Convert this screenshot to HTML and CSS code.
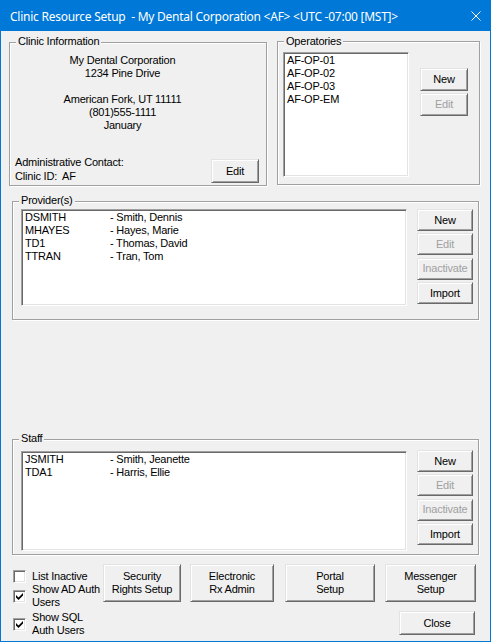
FILE: index.html
```html
<!DOCTYPE html>
<html lang="en">
<head>
  <meta charset="UTF-8" />
  <title>Clinic Resource Setup</title>
  <link rel="stylesheet" href="styles.css">
</head>
<body>
  <div class="window">
    <div class="titlebar">
      <span class="title">Clinic Resource Setup  - My Dental Corporation &lt;AF&gt; &lt;UTC -07:00 [MST]&gt;</span>
      <svg class="close-x" width="10" height="10" viewBox="0 0 10 10">
        <path d="M0.5 0.5L9.5 9.5M9.5 0.5L0.5 9.5" stroke="#fff" stroke-width="1" fill="none"/>
      </svg>
    </div>

    <div class="client">
      <div class="top-row">
        <div class="group clinic">
          <span class="group-label">Clinic Information</span>
          <div class="address">
            <div>My Dental Corporation</div>
            <div>1234 Pine Drive</div>
            <div class="blank"></div>
            <div>American Fork, UT 11111</div>
            <div>(801)555-1111</div>
            <div>January</div>
          </div>
          <div class="clinic-foot">
            <div class="contact">
              <div>Administrative Contact:</div>
              <div>Clinic ID:&nbsp; AF</div>
            </div>
            <button class="btn btn-clinic-edit">Edit</button>
          </div>
        </div>

        <div class="group operatories">
          <span class="group-label">Operatories</span>
          <div class="listbox op-list">
            <div>AF-OP-01</div>
            <div>AF-OP-02</div>
            <div>AF-OP-03</div>
            <div>AF-OP-EM</div>
          </div>
          <div class="btn-col op-buttons">
            <button class="btn">New</button>
            <button class="btn" disabled>Edit</button>
          </div>
        </div>
      </div>

      <div class="group people providers">
        <span class="group-label">Provider(s)</span>
        <div class="listbox people-list">
          <div class="row"><span class="code">DSMITH</span><span>- Smith, Dennis</span></div>
          <div class="row"><span class="code">MHAYES</span><span>- Hayes, Marie</span></div>
          <div class="row"><span class="code">TD1</span><span>- Thomas, David</span></div>
          <div class="row"><span class="code">TTRAN</span><span>- Tran, Tom</span></div>
        </div>
        <div class="btn-col people-buttons">
          <button class="btn">New</button>
          <button class="btn" disabled>Edit</button>
          <button class="btn" disabled>Inactivate</button>
          <button class="btn">Import</button>
        </div>
      </div>

      <div class="group people staff">
        <span class="group-label">Staff</span>
        <div class="listbox people-list">
          <div class="row"><span class="code">JSMITH</span><span>- Smith, Jeanette</span></div>
          <div class="row"><span class="code">TDA1</span><span>- Harris, Ellie</span></div>
        </div>
        <div class="btn-col people-buttons">
          <button class="btn">New</button>
          <button class="btn" disabled>Edit</button>
          <button class="btn" disabled>Inactivate</button>
          <button class="btn">Import</button>
        </div>
      </div>

      <div class="bottom-row">
        <div class="checks">
          <label class="check">
            <span class="box"></span>
            <span class="check-text">List Inactive</span>
          </label>
          <label class="check">
            <span class="box"><svg width="7" height="7" viewBox="0 0 7 7"><path d="M0 2V4.5L2.5 7L7 2.5V0L2.5 4.5Z" fill="#000"/></svg></span>
            <span class="check-text">Show AD Auth<br>Users</span>
          </label>
          <label class="check check-last">
            <span class="box"><svg width="7" height="7" viewBox="0 0 7 7"><path d="M0 2V4.5L2.5 7L7 2.5V0L2.5 4.5Z" fill="#000"/></svg></span>
            <span class="check-text">Show SQL<br>Auth Users</span>
          </label>
        </div>
        <div class="actions">
          <div class="action-row">
            <button class="btn btn-big btn-security">Security<br>Rights Setup</button>
            <button class="btn btn-big btn-erx">Electronic<br>Rx Admin</button>
            <button class="btn btn-big btn-portal">Portal<br>Setup</button>
            <button class="btn btn-big btn-messenger">Messenger<br>Setup</button>
          </div>
          <button class="btn btn-close">Close</button>
        </div>
      </div>
    </div>
  </div>
</body>
</html>
```

FILE: styles.css
```css
* {
  box-sizing: border-box;
}

body {
  margin: 0;
  font-family: "Liberation Sans", Arial, sans-serif;
  font-size: 11px;
  line-height: 13px;
  letter-spacing: -0.2px;
  color: #000;
  background: #f0f0f0;
}

.window {
  width: 491px;
  height: 642px;
  border: 1px solid #0078d7;
  background: #f0f0f0;
  display: flex;
  flex-direction: column;
}

.titlebar {
  height: 30px;
  flex: none;
  display: flex;
  align-items: center;
  padding: 0 9px 0 9px;
  background: #0078d7;
  color: #fff;
  font-family: "Noto Sans", sans-serif;
  font-size: 12px;
  letter-spacing: -0.25px;
  white-space: pre;
}

.close-x {
  margin-left: auto;
}

.client {
  flex: 1;
}

/* group boxes */
.group {
  position: relative;
  border: 1px solid #a0a0a0;
  box-shadow: inset 1px 1px 0 #fff, 1px 1px 0 #fff;
}

.group-label {
  position: absolute;
  left: 6px;
  top: -8px;
  padding: 0 2px;
  background: #f0f0f0;
}

.top-row {
  display: flex;
  align-items: flex-start;
  gap: 10px;
  padding: 10px 0 0 8px;
}

.clinic {
  width: 258px;
  height: 144px;
  margin-top: 1px;
  padding: 11px 7px 2px 5px;
  display: flex;
  flex-direction: column;
}

.address {
  width: 215px;
  text-align: center;
}

.blank {
  height: 13px;
}

.clinic-foot {
  margin-top: auto;
  display: flex;
  justify-content: space-between;
  align-items: flex-end;
}

.contact {
  line-height: 14px;
}

.btn-clinic-edit {
  width: 48px;
  height: 24px;
  margin-bottom: 1px;
}

.operatories {
  width: 203px;
  height: 144px;
  padding: 10px 0 0 5px;
  display: flex;
  align-items: flex-start;
}

.operatories .group-label {
  top: -7px;
}

.op-list {
  width: 126px;
  height: 125px;
}

.op-buttons {
  margin: 16px 0 0 11px;
  gap: 2px;
}

.op-buttons .btn {
  width: 48px;
  height: 23px;
}

/* provider / staff boxes */
.people {
  width: 467px;
  margin-left: 11px;
  display: flex;
  align-items: flex-start;
}

.providers {
  height: 119px;
  margin-top: 15px;
  padding: 7px 0 0 8px;
}

.providers .people-list {
  height: 97px;
}

.staff {
  height: 116px;
  margin-top: 119px;
  padding: 11px 0 0 8px;
}

.staff .people-list {
  height: 100px;
}

.staff .people-buttons {
  margin-top: -1px;
}

.people-list {
  width: 386px;
}

.people-buttons {
  margin-left: 10px;
  gap: 2.4px;
}

.people-buttons .btn {
  width: 56px;
  height: 22px;
}

.btn-col {
  display: flex;
  flex-direction: column;
}

.listbox {
  background: #fff;
  border: 1px solid;
  border-color: #a0a0a0 #fff #fff #a0a0a0;
  box-shadow: inset 1px 1px 0 #696969, inset -1px -1px 0 #e3e3e3;
  padding: 1px 3px;
  white-space: nowrap;
}

.row {
  display: flex;
}

.code {
  width: 85px;
}

/* buttons */
.btn {
  font: inherit;
  letter-spacing: inherit;
  line-height: 13px;
  color: #000;
  background: #f0f0f0;
  border: 1px solid;
  border-color: #e3e3e3 #696969 #696969 #e3e3e3;
  box-shadow: inset 1px 1px 0 #fff, inset -1px -1px 0 #a0a0a0;
  padding: 0;
  margin: 0;
  text-align: center;
}

.btn:disabled {
  color: #a0a0a0;
}

/* bottom area */
.bottom-row {
  display: flex;
  padding: 1px 0 0 12px;
}

.checks {
  width: 90px;
  flex: none;
  padding-top: 14px;
}

.check {
  display: flex;
  align-items: center;
  gap: 6px;
}

.check-last {
  margin-top: 2px;
}

.box {
  width: 13px;
  height: 13px;
  flex: none;
  display: flex;
  align-items: center;
  justify-content: center;
  background: #fff;
  border: 1px solid;
  border-color: #a0a0a0 #fff #fff #a0a0a0;
  box-shadow: inset 1px 1px 0 #696969, inset -1px -1px 0 #e3e3e3;
}

.box svg {
  display: block;
}

.check-text {
  white-space: nowrap;
}

.actions {
  display: flex;
  flex-direction: column;
  padding-top: 8px;
}

.action-row {
  display: flex;
}

.btn-big {
  height: 38px;
}

.btn-security {
  width: 78px;
}

.btn-erx {
  width: 84px;
  margin-left: 9px;
}

.btn-portal {
  width: 90px;
  margin-left: 11px;
}

.btn-messenger {
  width: 91px;
  margin-left: 10px;
}

.btn-close {
  align-self: flex-end;
  width: 76px;
  height: 24px;
  margin: 9px 1px 0 0;
}
```
